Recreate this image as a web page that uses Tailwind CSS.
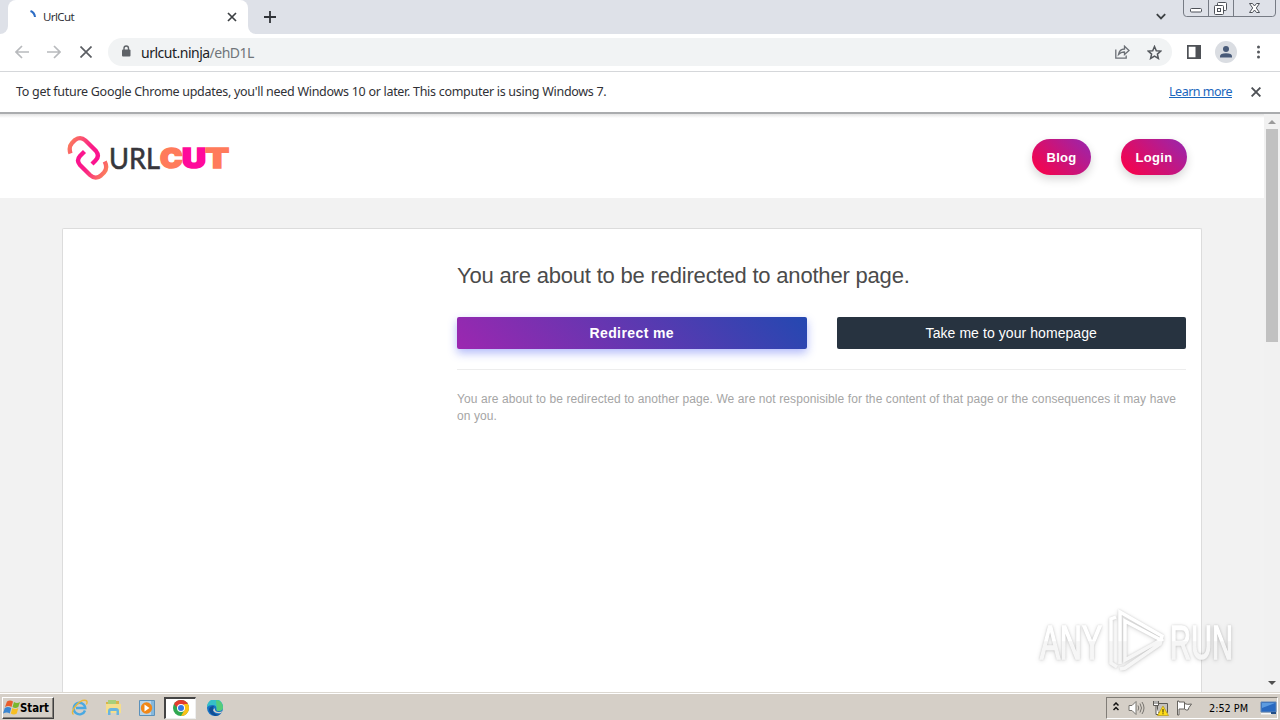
<!DOCTYPE html>
<html lang="en">
<head>
  <meta charset="UTF-8" />
  <meta name="viewport" content="width=device-width, initial-scale=1.0"/>
  <title>UrlCut</title>
  <script src="https://cdn.jsdelivr.net/npm/@tailwindcss/browser@4"></script>
</head>
<body class="relative w-[1280px] h-[720px] overflow-hidden flex flex-col bg-white font-['Noto_Sans',sans-serif] text-[#303136]">

  <!-- Tab strip -->
  <div class="h-[34px] shrink-0 bg-[#dee1e8] flex">
    <div class="w-2 bg-white shrink-0"><div class="h-full bg-[#dee1e8] rounded-br-lg"></div></div>
    <div class="w-[240px] bg-white rounded-t-lg flex items-center pl-[14px] pr-[11px]">
      <svg class="w-4 h-4" viewBox="0 0 16 16" fill="none" stroke="#2c6cc4" stroke-width="2"><path d="M8.500 2Q12.500 3.500 13 8"/></svg>
      <span class="ml-[5px] text-[11.5px] tracking-[-0.6px]">UrlCut</span>
      <svg class="ml-auto w-[10px] h-[10px]" viewBox="0 0 10 10" stroke="#3c4043" stroke-width="1.7"><path d="M1 1l8 8M9 1l-8 8"/></svg>
    </div>
    <div class="w-2 bg-white shrink-0"><div class="h-full bg-[#dee1e8] rounded-bl-lg"></div></div>
    <svg class="ml-2 mt-[11px] w-3 h-3" viewBox="0 0 12 12" stroke="#303338" stroke-width="1.8"><path d="M6 0v12M0 6h12"/></svg>
    <svg class="ml-auto mt-[13px] w-[10px] h-[8px]" viewBox="0 0 10 8" fill="none" stroke="#3c4043" stroke-width="1.8"><path d="M.8 1.2L5 5.5l4.2-4.3"/></svg>
    <svg class="ml-[17px] mr-[4px] w-[93px] h-[18px]" viewBox="0 0 93 18" fill="none" stroke="#767b84">
      <path d="M.5 0v13q0 3.500 3 3.500h86q3 0 3-3.500V0M25.500 0v16M50.500 0v16"/>
      <g stroke="#4d5158">
        <rect x="7.500" y="8.500" width="11" height="3.500" rx="1" fill="#fff"/>
        <rect x="34.500" y="2.500" width="9" height="8" rx="1" fill="#fff"/>
        <rect x="31.500" y="5.500" width="9" height="9" rx="1" fill="#fff"/>
        <rect x="34.500" y="8.500" width="3" height="3"/>
        <path fill="#fff" d="M66.500 3.500h3l2 2.500 2-2.500h3l-3.200 4.500 3.200 4.500h-3l-2-2.500-2 2.500h-3l3.200-4.500z"/>
      </g>
    </svg>
  </div>

  <!-- Toolbar -->
  <div class="h-[38px] shrink-0 border-b border-[#d5d7da] flex items-center pl-[15px] pb-px">
    <svg class="w-[14px] h-[14px]" viewBox="0 0 14 14" fill="none" stroke="#b8babd" stroke-width="1.7"><path d="M14 7H1.500M7 1L1 7l6 6"/></svg>
    <svg class="ml-[18px] w-[14px] h-[14px]" viewBox="0 0 14 14" fill="none" stroke="#b8babd" stroke-width="1.7"><path d="M0 7h12.500M7 1l6 6-6 6"/></svg>
    <svg class="ml-[19px] w-3 h-3" viewBox="0 0 12 12" stroke="#5b5e63" stroke-width="1.7"><path d="M.5.5l11 11M11.500.5l-11 11"/></svg>
    <div class="ml-4 w-[1064px] h-[28px] rounded-full bg-[#f1f3f4] flex items-center pl-[13px] pr-[10px]">
      <svg class="w-[10px] h-[12px] -mt-0.5" viewBox="0 0 10 12" fill="none"><rect x="1" y="4.500" width="8.500" height="7" rx="1" fill="#5f6368"/><path d="M3 5V3.200a2.200 2.200 0 0 1 4.500 0V5" stroke="#5f6368" stroke-width="1.400"/></svg>
      <span class="ml-[10px] text-[14px] tracking-[-0.5px] text-[#202124]">urlcut.ninja<span class="text-[#70757a]">/ehD1L</span></span>
      <svg class="ml-auto w-[15px] h-[14px]" viewBox="0 0 15 14" fill="none" stroke="#6b6f75" stroke-width="1.300"><path d="M.8 4.500v8.700h10.400v-2.700M3.500 9.500Q4.500 4 9.500 4V1.200L14 5.500 9.500 9.500V7Q6 6.800 3.500 9.500z"/></svg>
      <svg class="ml-[17px] w-[15px] h-[15px]" viewBox="0 0 15 15" fill="none" stroke="#54585d" stroke-width="1.500"><path d="M7.500 1.500l1.800 4.200 4.500.4-3.400 3 1 4.400-3.900-2.400-3.900 2.400 1-4.400-3.400-3 4.500-.4z"/></svg>
    </div>
    <svg class="ml-[15px] w-[14px] h-[14px]" viewBox="0 0 14 14"><path fill="#4e5156" fill-rule="evenodd" d="M0 0h14v14H0zM1.700 1.700v10.600h6.800V1.700z"/></svg>
    <svg class="ml-[14px] w-[22px] h-[22px]" viewBox="0 0 22 22"><circle cx="11" cy="11" r="11" fill="#dadde2"/><circle cx="11" cy="8" r="3" fill="#485a78"/><path d="M5 16.500v-1.200q0-3 6-3t6 3v1.200z" fill="#485a78"/></svg>
    <svg class="ml-5 w-1 h-[14px]" viewBox="0 0 4 14" fill="#55585d"><circle cx="1.500" cy="2" r="1.500"/><circle cx="1.500" cy="7" r="1.500"/><circle cx="1.500" cy="12" r="1.500"/></svg>
  </div>

  <!-- Info bar -->
  <div class="h-[42px] shrink-0 flex items-center pl-4 pr-[19px] text-[12.5px] border-b-2 border-[#aaacae]">
    <span class="whitespace-nowrap tracking-[-0.29px]">To get future Google Chrome updates, you'll need Windows 10 or later. This computer is using Windows 7.</span>
    <a class="ml-auto text-[#1a66bd] underline tracking-[-0.5px] whitespace-nowrap">Learn more</a>
    <svg class="ml-[19px] w-[10px] h-[10px]" viewBox="0 0 10 10" stroke="#4d5055" stroke-width="1.900"><path d="M.6.6l8.800 8.800M9.400.6L.6 9.400"/></svg>
  </div>

  <!-- Page -->
  <div class="h-[578px] shrink-0 flex font-['Liberation_Sans',sans-serif]">
    <div class="w-[1264px] flex flex-col bg-[#f2f2f2]">
      <header class="h-[84px] shrink-0 bg-gradient-to-b from-[#e3e3e3] via-white via-[4px] to-white flex items-center pl-[66px] pr-[77px] pt-[3px]">
        <svg class="w-[164px] h-[46px]" viewBox="66 135 164 46" fill="none">
          <defs>
            <linearGradient id="linkTop" x1="68" y1="145" x2="98" y2="160" gradientUnits="userSpaceOnUse"><stop stop-color="#fb7b5d"/><stop offset=".65" stop-color="#fb1c87"/><stop offset="1" stop-color="#fb1291"/></linearGradient>
            <linearGradient id="linkBottom" x1="77" y1="155" x2="107" y2="170" gradientUnits="userSpaceOnUse"><stop stop-color="#fb1291"/><stop offset=".4" stop-color="#fb1c87"/><stop offset="1" stop-color="#fb7b5d"/></linearGradient>
          </defs>
          <path d="M70.500 153.500Q68.300 147 72 143l3-3Q80.500 136 85.500 140.500L96 151q4 5-.5 9.500L92 164" stroke="url(#linkTop)" stroke-width="4.300"/>
          <path d="M84.500 151.500L80 156q-4 4.500 0 9L90 175q5.500 5 11 .5l3-3Q108 168 104.700 161.500" stroke="url(#linkBottom)" stroke-width="4.300"/>
          <text x="109" y="168.500" textLength="51" lengthAdjust="spacingAndGlyphs" font-family="Lato" font-size="29" fill="#37363b" stroke="#37363b" stroke-width=".6">URL</text>
          <g font-family="Inter, Lato" font-weight="900" font-size="27" stroke-width="1.600">
            <text x="160" y="168" textLength="22.500" lengthAdjust="spacingAndGlyphs" fill="#ff7b5b" stroke="#ff7b5b">C</text>
            <text x="182" y="168" textLength="24" lengthAdjust="spacingAndGlyphs" fill="#ff0a9b" stroke="#ff0a9b">U</text>
            <text x="205.500" y="168" textLength="23.500" lengthAdjust="spacingAndGlyphs" fill="#ff7b5b" stroke="#ff7b5b">T</text>
          </g>
        </svg>
        <nav class="ml-auto mb-[2px] flex gap-[30px] text-[13px] font-bold text-white tracking-[0.3px]">
          <a class="w-[59px] h-9 rounded-full bg-linear-[45deg,#ff0043,#9627b0] shadow-[0_4px_10px_rgba(0,0,0,0.16)] flex items-center justify-center pt-[2px]">Blog</a>
          <a class="w-[66px] h-9 rounded-full bg-linear-[45deg,#ff0043,#9627b0] shadow-[0_4px_10px_rgba(0,0,0,0.16)] flex items-center justify-center pt-[2px]">Login</a>
        </nav>
      </header>

      <main class="mt-[30px] ml-[62px] w-[1140px] flex-1 bg-white border border-b-0 border-[#dcdcdc] rounded-t-xs pl-[394px] pr-[15px]">
        <h1 class="mt-[33px] text-[22px] leading-[28px] text-[#4b4b4b] tracking-[-0.19px] whitespace-nowrap">You are about to be redirected to another page.</h1>
        <div class="mt-[27px] grid grid-cols-2 gap-[30px] text-white">
          <button class="h-8 rounded-xs bg-linear-[45deg,#9c27b0,#2448b1] shadow-[0_4px_10px_rgba(60,80,240,0.4)] text-[14px] font-bold tracking-[0.4px]">Redirect me</button>
          <button class="h-8 rounded-xs bg-[#273340] text-[14px] tracking-[0.07px]">Take me to your homepage</button>
        </div>
        <hr class="mt-5 border-[#ededed]"/>
        <p class="mt-[21px] text-[12px] leading-[17px] text-[#a5a5a5] tracking-[0.09px] whitespace-nowrap">You are about to be redirected to another page. We are not responisible for the content of that page or the consequences it may have<br/>on you.</p>
      </main>
    </div>

    <!-- Scrollbar -->
    <div class="w-4 bg-[#f1f1f1] flex flex-col items-center">
      <svg class="mt-[6px] w-2 h-1" viewBox="0 0 8 4"><path d="M0 4l4-4 4 4z" fill="#9a9a9a"/></svg>
      <div class="mt-[5px] w-3 h-[213px] bg-[#c1c1c1]"></div>
      <svg class="mt-auto mb-[7px] w-2 h-1" viewBox="0 0 8 4"><path d="M0 0l4 4 4-4z" fill="#505050"/></svg>
    </div>
  </div>

  <!-- Taskbar -->
  <div class="h-7 shrink-0 bg-[#d5cfc7] border-t border-[#dcd8d1] shadow-[inset_0_1px_0_#fff] flex items-center text-black pt-[2px]">
    <div class="ml-[2px] w-[52px] h-[22px] border border-t-white border-l-white border-b-[#404040] border-r-[#404040] shadow-[inset_-1px_-1px_0_#85817b] flex items-center">
      <svg class="w-[17px] h-[17px] shrink-0" viewBox="0 0 17 17">
        <path d="M4 2.500q3-2 6 0L8.500 8Q5.500 6 2 8z" fill="#e95d2b"/><path d="M11 3q3 2 6 0L15.300 8Q12.500 10 9.500 8z" fill="#79b72e"/>
        <path d="M1.800 9Q5 7 8.200 9L6.800 14.500Q4 12.500 0 14.500z" fill="#3b86d1"/><path d="M9.300 9q3 2 6 0l-1.500 5.500q-3 2-6 0z" fill="#f8bf23"/>
      </svg>
      <svg class="w-[32px] h-[18px]" viewBox="0 0 32 18"><text x="0" y="12.500" font-family="DejaVu Sans Condensed, DejaVu Sans" font-weight="bold" font-size="11.500" textLength="29" lengthAdjust="spacingAndGlyphs">Start</text></svg>
    </div>
    <svg class="ml-[17px] w-[17px] h-[17px]" viewBox="0 0 17 17" fill="none">
      <path d="M14 11.500A5.800 5.800 0 1 1 14.300 9H5" stroke="#4aa9e2" stroke-width="2.400"/>
      <path d="M2.500 15.500C-2 13 9-.5 15 1.500q2 1 .3 4" stroke="#e9b83c" stroke-width="1.400"/>
    </svg>
    <svg class="ml-[17px] w-[17px] h-[17px]" viewBox="0 0 17 17">
      <path d="M1 3h5l1-1h7v4H1z" fill="#d9b549"/><path d="M3 1h8v5H3z" fill="#a8cf7b"/><path d="M1 5h15v9H1z" fill="#f5de8c"/>
      <path d="M3 16v-4q0-3 3-3h5q3 0 3 3v4h-2.500v-4h-6v4z" fill="#69b5df"/>
    </svg>
    <svg class="ml-[17px] w-[16px] h-[16px]" viewBox="0 0 16 16"><path d="M.5.5h15v15H.5z" fill="#b8d4ea" stroke="#5b91bb"/><path d="M12 1h3v14h-3z" fill="#86b8dc"/><circle cx="7.500" cy="8" r="5.700" fill="#f18718"/><path d="M5.500 4.500l5 3.500-5 3.500z" fill="#fff"/></svg>
    <div class="ml-[9px] w-[32px] h-[22px] bg-white border-t-2 border-l-2 border-t-[#444] border-l-[#444] border-r border-b border-r-[#eee] border-b-[#eee] flex items-center justify-center">
      <svg class="w-4 h-4" viewBox="0 0 16 16">
        <circle cx="8" cy="8" r="8" fill="#30a851"/><path d="M8 8L1.070 4A8 8 0 0 1 14.930 4z" fill="#e33b2e"/><path d="M8 8l3.500-4h3.430A8 8 0 0 1 8 16l3.500-6z" fill="#fbc116"/><path d="M1.070 4L5 11l3-3z" fill="#30a851"/>
        <path d="M1.070 4H8v4H4.500z" fill="#e33b2e"/><circle cx="8" cy="8" r="4" fill="#fff"/><circle cx="8" cy="8" r="3" fill="#3577e5"/>
      </svg>
    </div>
    <svg class="ml-[11px] w-[16px] h-[16px]" viewBox="0 0 16 16">
      <circle cx="8" cy="8" r="8" fill="#1773c5"/><path d="M0 7a8 8 0 0 1 16 0q0 4-4.500 4Q9 11 9.500 8 9 5 5.500 5 2 5 0 7z" fill="#35bfc8"/><path d="M9 .1A8 8 0 0 1 16 7q0 4-4.500 4Q9 11 9.800 8.500z" fill="#55cc7a"/>
      <path d="M6 8q-1 5 4 6.500 3 .5 5-2Q12 16 8 16 2 14 2 9q1-3 5-3z" fill="#124e94"/><path d="M8 8q-1 3 3 4 3 .3 4.500-1L14 13q-6 1-8-3z" fill="#d5cfc7"/>
    </svg>

    <!-- Tray -->
    <div class="ml-auto mr-[2px] w-[172px] h-[22px] border border-t-[#817d77] border-l-[#817d77] border-b-white border-r-white flex items-center pl-[6px]">
      <svg class="w-[6px] h-[9px] -mt-0.5" viewBox="0 0 6 9" fill="none" stroke="#111" stroke-width="1.500"><path d="M.5 3.500L3 1l2.500 2.500M.5 8L3 5.500 5.500 8"/></svg>
      <svg class="ml-[9px] w-[17px] h-[16px]" viewBox="0 0 17 16" fill="none" stroke="#77746f"><path d="M1 5.500h3L8 1.500v13L4 10.500H1z" fill="#fff"/><path d="M10 5.500q1.500 2.500 0 5M12 3.500q3 4.500 0 9M14 2q4 6 0 12"/></svg>
      <svg class="ml-[7px] w-[17px] h-[16px]" viewBox="0 0 17 16"><path d="M5.500 3.500h10v9h-10z" fill="#c5c2bd" stroke="#5b5955"/><path d="M1.500 1v4.500h5V1M4 6v8.500h3M3 1v3M5 1v3" fill="#fff" stroke="#5b5955"/><path d="M11 6l5.500 9.500h-11z" fill="#ffdc18" stroke="#b59a19" stroke-width=".7"/><path d="M10.500 9h1v3.500h-1zM10.500 13.300h1v1h-1z" fill="#332b0c"/></svg>
      <svg class="ml-[7px] w-[17px] h-[16px]" viewBox="0 0 17 16" fill="#fff" stroke="#66635e"><path d="M1.500 1v14H3V9h5.500V2H3V1zM8.500 3.500q3 1.500 7 .5l-2.500 3.500L12 10Q10 10.500 8.500 9z"/></svg>
      <svg class="ml-[15px] w-[42px] h-[18px]" viewBox="0 0 42 18"><text x="1" y="12.500" font-family="DejaVu Sans Condensed, DejaVu Sans" font-size="11" textLength="39" lengthAdjust="spacingAndGlyphs">2:52 PM</text></svg>
      <svg class="ml-[10px] w-[17px] h-[16px]" viewBox="0 0 17 16"><path d="M1 2h15v10H1z" fill="#2969c0" stroke="#5c85b7"/><path d="M2 3h13L2 8z" fill="#5c9be0"/><path d="M1 13h11v1.500H1z" fill="#f7f7f7"/><path d="M11 12h5v2h-5z" fill="#234e86"/></svg>
    </div>
  </div>

  <!-- Watermark -->
  <svg class="absolute left-[1030px] top-[602px] w-[212px] h-[78px] [filter:drop-shadow(0_0_1px_rgba(0,0,0,0.14))_drop-shadow(0_1px_2px_rgba(0,0,0,0.14))]" viewBox="1030 602 212 78" fill="none">
    <defs>
      <linearGradient id="mark" x1="0" y1="610" x2="0" y2="671" gradientUnits="userSpaceOnUse"><stop offset=".5" stop-color="#fff"/><stop offset=".52" stop-color="#f6f6f6"/></linearGradient>
    </defs>
    <g font-family="Liberation Sans Narrow, Liberation Sans" font-size="49" fill="url(#mark)" stroke="url(#mark)" stroke-width="1.500">
      <text x="1040" y="659" textLength="62" lengthAdjust="spacingAndGlyphs">ANY</text>
      <text x="1170" y="659" textLength="63" lengthAdjust="spacingAndGlyphs">RUN</text>
    </g>
    <path d="M1116 617l-5 2v44l6 4M1120 664V612l42 24-2 8-35 24-5 1M1125 621l36 19-36 20z" stroke="url(#mark)" stroke-width="3.500"/>
  </svg>

</body>
</html>
